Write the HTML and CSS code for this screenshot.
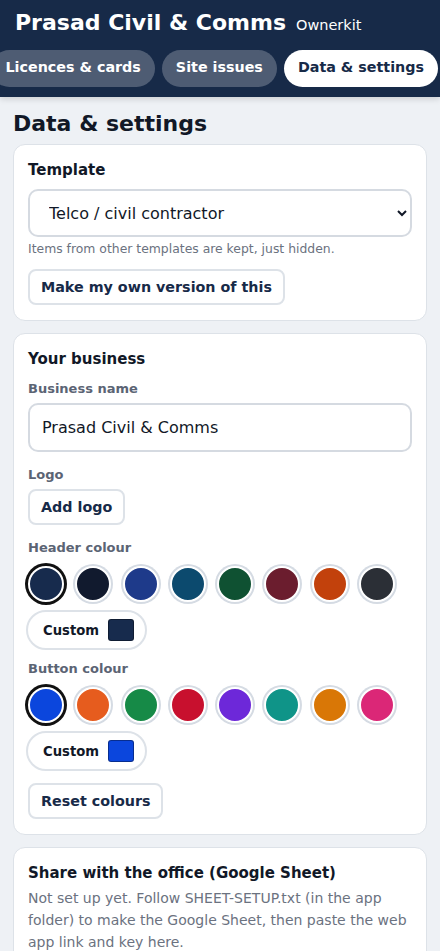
FILE: index.html
```html
<!DOCTYPE html>
<html lang="en">
<head>
    <meta charset="UTF-8">
    <meta name="viewport" content="width=device-width, initial-scale=1.0">
    <title>Ownerkit - Data &amp; settings</title>
    <link rel="stylesheet" href="styles.css">
</head>
<body>
    <header class="topbar">
        <div class="brand">
            <span class="brand-name">Prasad Civil &amp; Comms</span>
            <span class="brand-app">Ownerkit</span>
        </div>
        <nav class="tabs">
            <button class="tab">Licences &amp; cards</button>
            <button class="tab">Site issues</button>
            <button class="tab active">Data &amp; settings</button>
        </nav>
    </header>

    <main class="page">
        <h2 class="page-title">Data &amp; settings</h2>

        <section class="card">
            <h3>Template</h3>
            <select class="field select">
                <option>Telco / civil contractor</option>
            </select>
            <p class="hint">Items from other templates are kept, just hidden.</p>
            <button class="btn">Make my own version of this</button>
        </section>

        <section class="card">
            <h3>Your business</h3>
            <label class="label">Business name</label>
            <input class="field" type="text" value="Prasad Civil &amp; Comms">

            <label class="label">Logo</label>
            <button class="btn">Add logo</button>

            <label class="label">Header colour</label>
            <div class="swatches">
                <button class="swatch selected" style="background:#172b4d"></button>
                <button class="swatch" style="background:#111a2e"></button>
                <button class="swatch" style="background:#1e3a8a"></button>
                <button class="swatch" style="background:#0c4a6e"></button>
                <button class="swatch" style="background:#0f5132"></button>
                <button class="swatch" style="background:#6b1d2e"></button>
                <button class="swatch" style="background:#c2410c"></button>
                <button class="swatch" style="background:#2b2f36"></button>
            </div>
            <div class="custom">Custom <span class="chip" style="background:#172b4d"></span></div>

            <label class="label">Button colour</label>
            <div class="swatches">
                <button class="swatch selected" style="background:#0b46dd"></button>
                <button class="swatch" style="background:#e65c1e"></button>
                <button class="swatch" style="background:#168a47"></button>
                <button class="swatch" style="background:#c8102e"></button>
                <button class="swatch" style="background:#6d28d9"></button>
                <button class="swatch" style="background:#0f9488"></button>
                <button class="swatch" style="background:#d97706"></button>
                <button class="swatch" style="background:#db2777"></button>
            </div>
            <div class="custom">Custom <span class="chip" style="background:#0b46dd"></span></div>

            <button class="btn reset">Reset colours</button>
        </section>

        <section class="card share">
            <h3>Share with the office (Google Sheet)</h3>
            <p class="muted">Not set up yet. Follow SHEET-SETUP.txt (in the app folder) to make the Google Sheet, then paste the web app link and key here.</p>
        </section>
    </main>
</body>
</html>
```

FILE: styles.css
```css
body {
    margin: 0;
    font-family: "DejaVu Sans", sans-serif;
    background: #eef1f5;
    color: #111827;
}
.topbar {
    background: #172a48;
    color: white;
    height: 97px;
    box-shadow: 0 2px 6px rgba(0,0,0,0.15);
    overflow: hidden;
}
.brand {
    display: flex;
    align-items: baseline;
    gap: 10px;
    padding: 10px 15px 0;
    height: 41px;
    box-sizing: border-box;
}
.brand-name {
    font-size: 22px;
    font-weight: bold;
}
.brand-app {
    font-size: 14.5px;
}
.tabs {
    display: flex;
    justify-content: flex-end;
    gap: 7px;
    padding: 9px 2px 0 0;
}
.tab {
    flex: none;
    font-family: inherit;
    font-size: 14.3px;
    font-weight: bold;
    color: white;
    background: rgba(255,255,255,0.24);
    border: none;
    border-radius: 19px;
    height: 37px;
    padding: 0 14px 3px;
}
.tab.active {
    background: white;
    color: #172a48;
}
.page {
    padding: 14px 13px;
}
.page-title {
    font-size: 22px;
    margin: 0 0 8px;
    color: #111827;
}
.card {
    background: white;
    border: 1px solid #dde2e8;
    border-radius: 12px;
    padding: 16px 14px 15px;
    margin-bottom: 12px;
}
.card h3 {
    font-size: 15px;
    margin: 0 0 10px;
}
.share h3 {
    margin-bottom: 5px;
}
.field {
    display: block;
    width: 100%;
    box-sizing: border-box;
    height: 48px;
    border: 2px solid #d5dae1;
    border-radius: 10px;
    background: white;
    font-family: inherit;
    font-size: 16px;
    color: #111827;
    padding: 0 12px;
}
input.field {
    height: 49px;
}
.select {
    padding-left: 15px;
}
.hint {
    font-size: 12.4px;
    color: #6b7280;
    margin: 4px 0 13px;
}
.btn {
    display: block;
    font-family: inherit;
    font-size: 14.3px;
    font-weight: bold;
    color: #172a48;
    background: white;
    border: 2px solid #dde2e8;
    border-radius: 8px;
    height: 36px;
    padding: 0 11px;
}
.label {
    display: block;
    font-size: 13px;
    font-weight: bold;
    color: #5b6474;
    margin: 15px 0 7px;
}
.card h3 + .label {
    margin-top: 13px;
}
.swatches {
    display: flex;
    gap: 11.3px;
    padding: 4px 0;
}
.swatch {
    width: 36px;
    height: 36px;
    box-sizing: border-box;
    border-radius: 50%;
    border: 2px solid white;
    box-shadow: 0 0 0 2px #d5dbe3;
    padding: 0;
}
.swatch.selected {
    box-shadow: 0 0 0 3px #111;
}
.custom {
    display: inline-flex;
    align-items: center;
    gap: 9px;
    margin: 4px 0 0 -2px;
    height: 40px;
    box-sizing: border-box;
    padding: 0 11px 0 15px;
    border: 2px solid #dde2e8;
    border-radius: 20px;
    font-size: 13.2px;
    font-weight: bold;
}
.chip {
    width: 26px;
    height: 22px;
    border-radius: 3px;
    border: 1px solid rgba(0,0,0,0.35);
    box-sizing: border-box;
}
.custom + .label {
    margin-top: 11px;
}
.reset {
    margin-top: 12px;
}
.muted {
    font-size: 14px;
    line-height: 22px;
    color: #6b7280;
    margin: 0;
}
```
